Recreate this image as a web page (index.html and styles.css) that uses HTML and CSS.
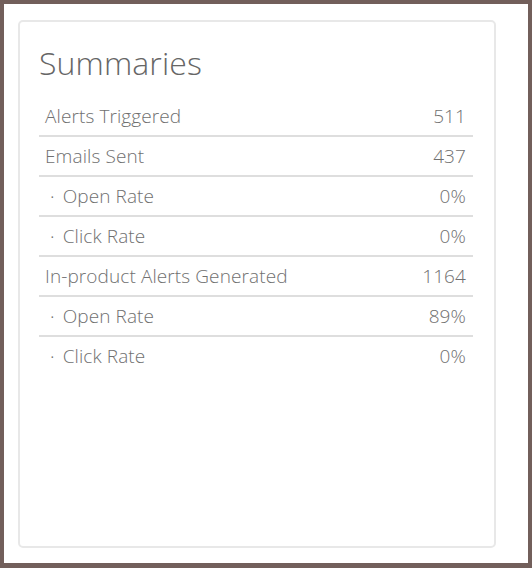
FILE: index.html
```html
<!DOCTYPE html>
<html>
<head>
<meta charset="utf-8">
<link rel="stylesheet" href="styles.css">
</head>
<body>
<div class="frame">
  <section class="card">
    <h1 class="title">Summaries</h1>
    <div class="rows">
      <div class="row"><span class="label">Alerts Triggered</span><span class="value">511</span></div>
      <div class="row"><span class="label">Emails Sent</span><span class="value">437</span></div>
      <div class="row"><span class="label sub"><span class="dot">·</span>Open Rate</span><span class="value">0%</span></div>
      <div class="row"><span class="label sub"><span class="dot">·</span>Click Rate</span><span class="value">0%</span></div>
      <div class="row"><span class="label">In-product Alerts Generated</span><span class="value">1164</span></div>
      <div class="row"><span class="label sub"><span class="dot">·</span>Open Rate</span><span class="value">89%</span></div>
      <div class="row last"><span class="label sub"><span class="dot">·</span>Click Rate</span><span class="value">0%</span></div>
    </div>
  </section>
</div>
</body>
</html>
```
FILE: styles.css
```css
html, body {
  margin: 0;
  padding: 0;
  background: #ffffff;
}
.frame {
  box-sizing: border-box;
  width: 532px;
  height: 568px;
  border: 4px solid #725f5b;
  border-bottom-width: 5px;
  padding: 16px 32px 15px 14px;
  font-family: "Open Sans", "Liberation Sans", sans-serif;
}
.card {
  box-sizing: border-box;
  height: 528px;
  border: 2px solid #e8e8e8;
  border-radius: 5px;
  padding: 19px 21px 0 19px;
}
.title {
  margin: 0 0 12px 0;
  font-size: 32px;
  line-height: 44px;
  font-weight: 300;
  letter-spacing: 0.1px;
  color: #666666;
}
.rows {
  display: flex;
  flex-direction: column;
}
.row {
  display: flex;
  justify-content: space-between;
  align-items: center;
  height: 38px;
  border-bottom: 2px solid #dedede;
  padding: 0 7px 0 6px;
  font-size: 19px;
  font-weight: 300;
  letter-spacing: 0.1px;
  color: #707070;
}
.row.last {
  border-bottom-color: transparent;
}
.label.sub {
  display: flex;
  align-items: center;
}
.dot {
  display: inline-block;
  margin-left: 5px;
  margin-right: 8px;
}
```
